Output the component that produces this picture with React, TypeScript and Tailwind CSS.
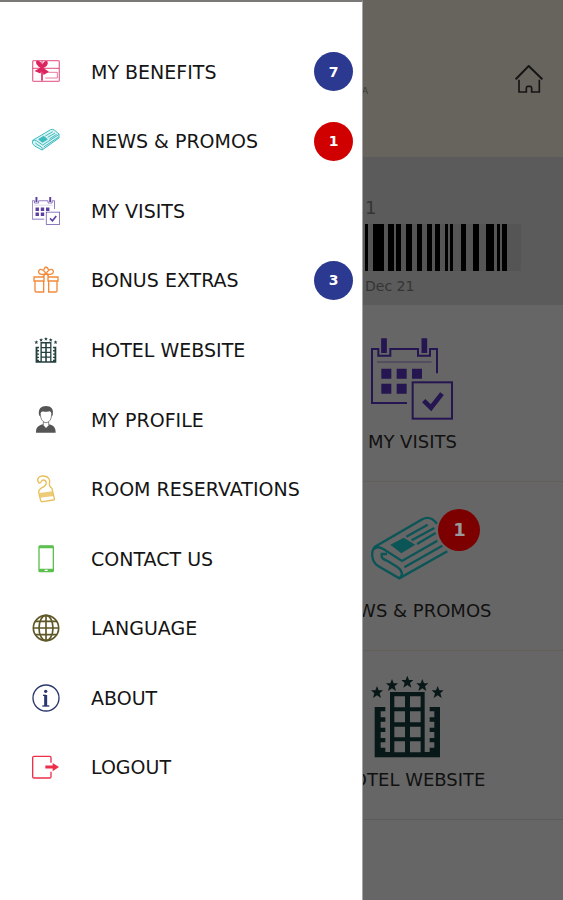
import type { ReactNode } from "react";

type IconProps = { className?: string };

const STARS = [
	[65, 109],
	[110, 88],
	[156, 78],
	[201, 88],
	[247, 109],
];

// x and width of each bar
const BARS = [
	[0, 3],
	[8, 11],
	[23, 6],
	[31, 5],
	[41, 6],
	[52, 5],
	[62, 5],
	[70, 5],
	[80, 3],
	[85, 3],
	[96, 5],
	[108, 6],
	[121, 8],
	[132, 3],
	[137, 5],
];

function HomeIcon({ className }: IconProps) {
	return (
		<svg viewBox="0 0 84 84" className={className} fill="none" stroke="currentColor" strokeWidth="5">
			<path d="M2 43 L41 3 L82 43" strokeWidth="6" />
			<path d="M12 44 V81 H34 V69 Q34 64 38 64 H46 Q50 64 50 69 V81 H73 V44" />
		</svg>
	);
}

function BenefitsIcon({ className }: IconProps) {
	return (
		<svg viewBox="36 39 84 84" className={className} fill="none" stroke="currentColor" strokeWidth="4">
			<rect x="38" y="47" width="80" height="62" rx="3" strokeOpacity=".65" />
			<path d="M38 70 H117 M66 47 V109" strokeOpacity=".65" />
			<path d="M80 82 H112 V99 H76" strokeWidth="3" strokeOpacity=".6" />
			<path
				d="M66 68 C52 64 46 48 53 49 C62 51 66 60 66 68 C68 56 77 46 81 51 C84 60 74 66 66 68 L48 78 L60 83 L66 68 L66 106 L66 68 L83 80 L72 87 Z"
				fill="currentColor"
			/>
		</svg>
	);
}

function NewsIcon({ className, strokeWidth = 7 }: IconProps & { strokeWidth?: number }) {
	return (
		<svg viewBox="50 49 246 246" className={className} fill="none" stroke="currentColor" strokeWidth={strokeWidth}>
			<path d="M248 99 C236 84 222 76 204 86 L62 168 C48 184 52 212 70 225 L135 263 L279 182" />
			<path d="M58 176 C66 166 78 170 88 176 L143 211 L249 150" />
			<path d="M98 190 H82 C80 202 86 206 100 211 L128 228 C143 238 148 252 136 263" />
			<path d="M150 230 L264 165" />
			<path d="M156 138 L220 102 M172 149 L240 112 M188 160 L244 127" />
			<path d="M108 162 L148 141 L183 162 L141 188 Z" fill="currentColor" stroke="none" />
		</svg>
	);
}

// Menu variant: the sheet is complete, as no badge lies over it
function NewsMenuIcon({ className }: IconProps) {
	return (
		<svg viewBox="36 249 84 84" className={className} fill="none" stroke="currentColor" strokeWidth="3">
			<path
				d="M38 289 L92 257 Q98 254 104 259 L117 270 V282 L66 318 L44 306 Q34 299 38 289Z"
				fill="currentColor"
				fillOpacity=".18"
			/>
			<path d="M39 290 Q44 287 49 290 L68 303 L116 272 M47 296 Q48 301 54 303 L64 309 Q69 312 66 318 M71 309 L116 279" />
			<path d="M76 276 L98 263 M83 280 L105 267 M88 285 L110 271" />
			<path d="M56 286 L71 277 L82 286 L67 295 Z" fill="currentColor" />
		</svg>
	);
}

function CalendarIcon({ className }: IconProps) {
	return (
		<svg viewBox="50 38 246 246" className={className} fill="none" stroke="currentColor" strokeWidth="6">
			<path d="M158 233 H53 V71 H72 V91 H108 V71 H191 V91 H227 V71 H248 V144" />
			<path d="M68 110 H232" strokeWidth="3" strokeOpacity=".6" />
			<path d="M89 39 V83 M210 39 V83" strokeWidth="17" />
			<path
				d="M81 130 H111 V160 H81Z M127 130 H157 V160 H127Z M173 130 H203 V160 H173Z M81 175 H111 V205 H81Z M127 175 H157 V205 H127Z"
				fill="currentColor"
				stroke="none"
			/>
			<rect x="175" y="171" width="118" height="109" />
			<path d="M208 226 L230 247 L263 205" strokeWidth="14" />
		</svg>
	);
}

function ExtrasIcon({ className }: IconProps) {
	return (
		<svg viewBox="36 246 84 84" className={className} fill="none" stroke="currentColor" strokeWidth="4">
			<path d="M42 279 H72 V291 H42Z M84 279 H114 V291 H84Z" />
			<path d="M45 291 V320 Q45 324 49 324 H71 V291 M111 291 V320 Q111 324 107 324 H86 V291" />
			<path d="M78 270 C62 274 52 268 57 259 C63 252 74 260 78 270 C92 274 104 268 99 259 C93 252 82 260 78 270Z" />
			<path d="M71 258 Q78 240 86 258 M76 269 L69 279 M80 269 L87 279" />
		</svg>
	);
}

function HotelIcon({ className }: IconProps) {
	return (
		<svg viewBox="47 60 219 246" className={className} fill="currentColor">
			{STARS.map(([x, y]) => (
				<path
					key={x}
					transform={`translate(${x} ${y})`}
					d="M0 -19 L5 -6 L18 -6 L8 3 L12 17 L0 9 L-12 17 L-8 3 L-18 -6 L-5 -6 Z"
				/>
			))}
			<path
				d="M58 153 H90 V166 H76 V184 H90 V197 H76 V215 H90 V228 H76 V246 H90 V259 H76 V275 H90 V288 H104 V108 H208 V288 H223 V275 H237 V259 H223 V246 H237 V228 H223 V215 H237 V197 H223 V184 H237 V166 H223 V153 H254 V304 H58 Z M117 121 V154 H149 V121 Z M164 121 V154 H196 V121 Z M117 166 V199 H149 V166 Z M164 166 V199 H196 V166 Z M117 212 V244 H149 V212 Z M164 212 V244 H196 V212 Z M117 256 V289 H149 V256 Z M164 256 V289 H196 V256 Z"
				fillRule="evenodd"
			/>
		</svg>
	);
}

function ProfileIcon({ className }: IconProps) {
	return (
		<svg viewBox="36 242 84 84" className={className} fill="currentColor">
			<path d="M57 269 C54 250 64 242 78 242 C93 242 102 251 98 269 L95 274 C95 264 93 259 89 258 C80 261 70 257 65 259 C61 262 61 267 61 274 Z" />
			<path
				d="M61 266 C61 282 70 292 78 292 C87 292 95 282 95 266 M70 289 V299 M86 289 V299"
				fill="none"
				stroke="currentColor"
				strokeWidth="3"
				strokeOpacity=".7"
			/>
			<path d="M48 322 C48 306 54 302 68 297 L78 308 L89 297 C102 302 107 307 107 322 Z" />
		</svg>
	);
}

function HangerIcon({ className }: IconProps) {
	return (
		<svg viewBox="36 28 84 84" className={className} fill="none" stroke="currentColor" strokeWidth="4">
			<path d="M56 51 C48 38 58 30 71 31 C86 32 92 43 88 54 C86 60 92 64 96 69 L103 99 Q104 103 100 103 L68 108 Q63 109 62 104 L56 80 C56 68 66 67 73 62 C83 54 79 43 70 43 C62 43 65 53 58 52 Z" />
			<path d="M58 82 L97 77 L101 91 L61 96 Z" fill="currentColor" fillOpacity=".8" stroke="none" />
		</svg>
	);
}

function PhoneIcon({ className }: IconProps) {
	return (
		<svg viewBox="36 239 84 84" className={className} fill="none" stroke="currentColor">
			<rect x="57" y="242" width="43" height="77" rx="3" strokeWidth="4" />
			<path d="M57 245 H100 M57 314 H100" strokeWidth="8" />
			<path d="M74 315 H83" stroke="#fff" strokeWidth="4" />
		</svg>
	);
}

function GlobeIcon({ className }: IconProps) {
	return (
		<svg viewBox="36 28 84 84" className={className} fill="none" stroke="currentColor" strokeWidth="5">
			<circle cx="78" cy="70" r="38" />
			<ellipse cx="78" cy="70" rx="21" ry="38" />
			<path d="M78 31 V109 M39 70 H117 M45 50 H111 M45 90 H111" />
		</svg>
	);
}

function AboutIcon({ className }: IconProps) {
	return (
		<svg viewBox="36 237 84 84" className={className} fill="none" stroke="currentColor" strokeWidth="4">
			<circle cx="78" cy="279" r="39" />
			<circle cx="77" cy="259" r="5" fill="currentColor" stroke="none" />
			<path d="M69 271 H78" />
			<path d="M77 270 V303" strokeWidth="9" />
			<path d="M67 303 H88" />
		</svg>
	);
}

function LogoutIcon({ className }: IconProps) {
	return (
		<svg viewBox="36 446 84 84" className={className} fill="none" stroke="currentColor" strokeWidth="4">
			<path d="M93 475 V460 Q93 456 89 456 H42 Q38 456 38 460 V517 Q38 521 42 521 H89 Q93 521 93 517 V502" />
			<path d="M76 488 H102" strokeWidth="9" />
			<path d="M98 476 L117 488 L98 501 Z" fill="currentColor" stroke="none" />
		</svg>
	);
}

type MenuItem = {
	label: string;
	icon: ReactNode;
	count?: number;
	countColor?: string;
};

const MENU: MenuItem[] = [
	{ label: "MY BENEFITS", icon: <BenefitsIcon className="size-7 text-[#dc2460]" />, count: 7, countColor: "bg-[#2b3990]" },
	{ label: "NEWS & PROMOS", icon: <NewsMenuIcon className="size-7 text-[#3dbcc0]" />, count: 1, countColor: "bg-[#d00000]" },
	{ label: "MY VISITS", icon: <CalendarIcon className="size-7 text-[#5b3fa0]" /> },
	{ label: "BONUS EXTRAS", icon: <ExtrasIcon className="size-7 text-[#f28a3c]" />, count: 3, countColor: "bg-[#2b3990]" },
	{ label: "HOTEL WEBSITE", icon: <HotelIcon className="h-[26px] w-6 text-[#24403f]" /> },
	{ label: "MY PROFILE", icon: <ProfileIcon className="size-7 text-[#555555]" /> },
	{ label: "ROOM RESERVATIONS", icon: <HangerIcon className="size-7 text-[#e8bf58]" /> },
	{ label: "CONTACT US", icon: <PhoneIcon className="size-7 text-[#5cc050]" /> },
	{ label: "LANGUAGE", icon: <GlobeIcon className="size-7 text-[#5f5726]" /> },
	{ label: "ABOUT", icon: <AboutIcon className="size-7 text-[#2a376c]" /> },
	{ label: "LOGOUT", icon: <LogoutIcon className="size-7 text-[#ee2f4a]" /> },
];

function Drawer() {
	return (
		<nav
			aria-label="Main menu"
			className="absolute inset-y-0 left-0 flex w-[363px] flex-col border-t-2 border-r border-t-[#7b7978] border-r-[#a5a5a5] bg-white pt-[35px] pb-[98px]"
		>
			<ul className="flex flex-1 flex-col">
				{MENU.map((item) => (
					<li key={item.label} className="flex flex-1">
						<a href="#" className="flex flex-1 items-center pr-[9px] pl-8 text-[#151515]">
							<span className="flex w-7 shrink-0 justify-center">{item.icon}</span>
							<span className="ml-[31px] flex-1 text-[19px] leading-6 whitespace-nowrap">
								{item.label}
							</span>
							{item.count && (
								<span
									className={`flex size-[39px] items-center justify-center rounded-full text-sm font-bold text-white ${item.countColor}`}
								>
									{item.count}
								</span>
							)}
						</a>
					</li>
				))}
			</ul>
		</nav>
	);
}

type TileProps = { label: string; icon: ReactNode; count?: number; line: string };

function Tile({ label, icon, count, line }: TileProps) {
	return (
		<a
			href="#"
			className={`flex flex-col items-center border-b pt-[25px] pb-[27px] text-[#111111] ${line}`}
		>
			<span className="relative flex size-[82px]">
				{icon}
				{count && (
					<span className="absolute top-0.5 left-[67px] flex size-[42px] items-center justify-center rounded-full bg-[#7d0000] text-lg font-bold text-[#999999]">
						{count}
					</span>
				)}
			</span>
			<span className="mt-2.5 text-lg leading-6 whitespace-nowrap">{label}</span>
		</a>
	);
}

export default function App() {
	return (
		<div
			className="relative min-h-screen overflow-hidden bg-[#666666]"
			style={{ fontFamily: '"DejaVu Sans", Verdana, sans-serif' }}
		>
			{/* Header */}
			<header className="flex h-[157px] items-center justify-between bg-[#67645d] pr-5 pl-[362px]">
				<span className="mt-6 text-[9px] leading-3 text-[#3c3a36]">A</span>
				<button type="button" aria-label="Home" className="text-[#151515]">
					<HomeIcon className="size-7" />
				</button>
			</header>

			{/* Member card */}
			<section className="h-[148px] bg-[#5b5b5b] pt-[39px] pl-[365px] text-[#343434]">
				<p className="text-lg leading-6">1</p>
				<svg viewBox="0 0 156 47" className="mt-1 h-[47px] w-[156px] bg-[#555555]">
					{BARS.map(([x, w]) => (
						<rect key={x} x={x} y="0" width={w} height="47" />
					))}
				</svg>
				<p className="mt-[3px] text-sm leading-6">Dec 21</p>
			</section>

			{/* Tiles */}
			<main className="ml-[46.5%] pt-2">
				<Tile label="MY VISITS" icon={<CalendarIcon className="size-full text-[#251550]" />} line="border-[#615f56]" />
				<Tile label="NEWS & PROMOS" icon={<NewsIcon className="size-full text-[#0b5557]" />} count={1} line="border-[#615f56]" />
				<Tile label="HOTEL WEBSITE" icon={<HotelIcon className="h-full text-[#081717]" />} line="border-[#5b5b5b]" />
			</main>

			<Drawer />
		</div>
	);
}
